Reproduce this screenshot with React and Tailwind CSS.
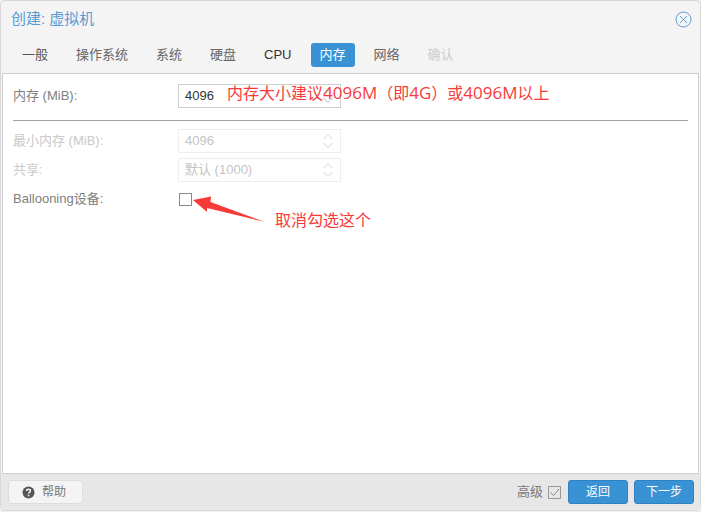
import React from "react";

const font = { fontFamily: '"Liberation Sans", "Noto Sans CJK SC", sans-serif' };

function Spinner({ className }) {
  return (
    <svg width="12" height="16" viewBox="0 0 12 16" fill="none" stroke="currentColor" strokeWidth="1" className={className}>
      <path d="M1.5 6 L6 1.5 L10.5 6" />
      <path d="M1.5 10 L6 14.500 L10.500 10" />
    </svg>
  );
}

function Field({ label, value, disabled }) {
  return (
    <div className="flex items-center h-6">
      <div className={`w-[165px] text-[13px] ${disabled ? "text-[#c9c9c9]" : "text-[#808080]"}`}>{label}</div>
      <div className={`w-[163px] h-6 border flex items-center justify-between pl-[6px] pr-[6px] text-[13px] ${disabled ? "border-[#eee] text-[#c4c4c4]" : "border-[#cfcfcf] text-[#333]"}`}>
        <span>{value}</span>
        <Spinner className={disabled ? "text-[#d4d4d4]" : "text-[#bbb]"} />
      </div>
    </div>
  );
}

const tabs = [
  ["一般", "text-[#555]"],
  ["操作系统", "text-[#666]"],
  ["系统", "text-[#666]"],
  ["硬盘", "text-[#666]"],
  ["CPU", "text-[#333]"],
  ["内存", "active"],
  ["网络", "text-[#666]"],
  ["确认", "text-[#ccc]"],
];

export default function App() {
  return (
    <div style={font} className="w-[701px] h-[512px] overflow-hidden bg-[#f0f0f0] relative">
      <div className="w-[701px] h-[511px] flex flex-col bg-[#f4f4f4] rounded-[5px] border border-[#d8d8d8]">
        <div className="h-[39px] shrink-0 flex items-center justify-between pl-[10px] pr-[8px] pb-[2px]">
          <span className="text-[15px] text-[#5b9bd5]">创建: 虚拟机</span>
          <svg width="17" height="17" viewBox="0 0 17 17" fill="none" stroke="#5b9bd5" strokeWidth="1">
            <circle cx="8.500" cy="8.500" r="7.500" />
            <path d="M5 5 L12 12 M12 5 L5 12" />
          </svg>
        </div>
        <div className="h-[33px] shrink-0 flex items-start pl-[12px] pt-[3px] gap-[10px]">
          {tabs.map(([t, c]) => (
            <div
              key={t}
              className={`h-6 px-[9px] flex items-center rounded-[3px] text-[13px] ${c === "active" ? "bg-[#3892d4] text-white" : c}`}
            >
              {t}
            </div>
          ))}
        </div>
        <div className="mx-px h-[401px] shrink-0 bg-white border border-[#cfcfcf] pt-[10px] px-[10px]">
          <Field label="内存 (MiB):" value="4096" />
          <div className="h-px bg-[#a3a3a3] mt-[12px] mb-[8px]" />
          <div className="flex flex-col gap-[5px]">
            <Field label="最小内存 (MiB):" value="4096" disabled />
            <Field label="共享:" value="默认 (1000)" disabled />
            <div className="flex items-center h-6">
              <div className="w-[166px] text-[13px] text-[#808080]">Ballooning设备:</div>
              <div className="w-[13px] h-[13px] border border-[#888]" />
            </div>
          </div>
        </div>
        <div className="flex-1 flex items-center justify-between bg-[#e7e7e7] rounded-b-[5px] pl-[7px] pr-[6px]">
          <div className="w-[75px] h-6 rounded-[3px] bg-[#f4f4f4] border border-[#ddd] flex items-center gap-[7px] pl-[13px] text-[12px] text-[#777]">
            <svg width="13" height="13" viewBox="0 0 13 13">
              <circle cx="6.500" cy="6.500" r="6" fill="#555" />
              <path d="M4.600 5 C4.600 2.800 8.400 2.800 8.400 5 C8.400 6.300 6.500 6.300 6.500 7.600" fill="none" stroke="#f5f5f5" strokeWidth="1.500" />
              <rect x="5.700" y="8.700" width="1.600" height="1.600" fill="#f5f5f5" />
            </svg>
            帮助
          </div>
          <div className="flex items-center">
            <span className="text-[13px] text-[#777] mr-[5px]">高级</span>
            <div className="w-[13px] h-[13px] border border-[#999] flex items-center justify-center mr-[7px]">
              <svg width="11" height="11" viewBox="0 0 11 11" fill="none" stroke="#888" strokeWidth="1">
                <path d="M1.500 5.500 L4.500 8.500 L10 2" />
              </svg>
            </div>
            <div className="w-[60px] h-6 rounded-[3px] bg-[#3892d4] border border-[#2f82c0] flex items-center justify-center text-[12px] text-white mr-[6px]">返回</div>
            <div className="w-[60px] h-6 rounded-[3px] bg-[#3892d4] border border-[#2f82c0] flex items-center justify-center text-[12px] text-white">下一步</div>
          </div>
        </div>
      </div>
      <span className="absolute left-[227px] top-[83px] text-[16px] leading-5 text-[#f93a3a] whitespace-nowrap" style={{ fontFamily: '"Open Sans", "Noto Sans CJK SC", sans-serif' }}>内存大小建议<span className="text-[17px]">4096M</span>（即<span className="text-[17px]">4G</span>）或<span className="text-[17px]">4096M</span>以上</span>
      <span className="absolute left-[275px] top-[211px] text-[16px] leading-5 text-[#f93a3a] whitespace-nowrap">取消勾选这个</span>
      <svg className="absolute left-[190px] top-[192px]" width="76" height="32" viewBox="0 0 76 32">
        <path d="M3 8 L21 4.500 L20.500 10 L75 30 L17 16 L17 20 Z" fill="#f93a3a" />
      </svg>
    </div>
  );
}
